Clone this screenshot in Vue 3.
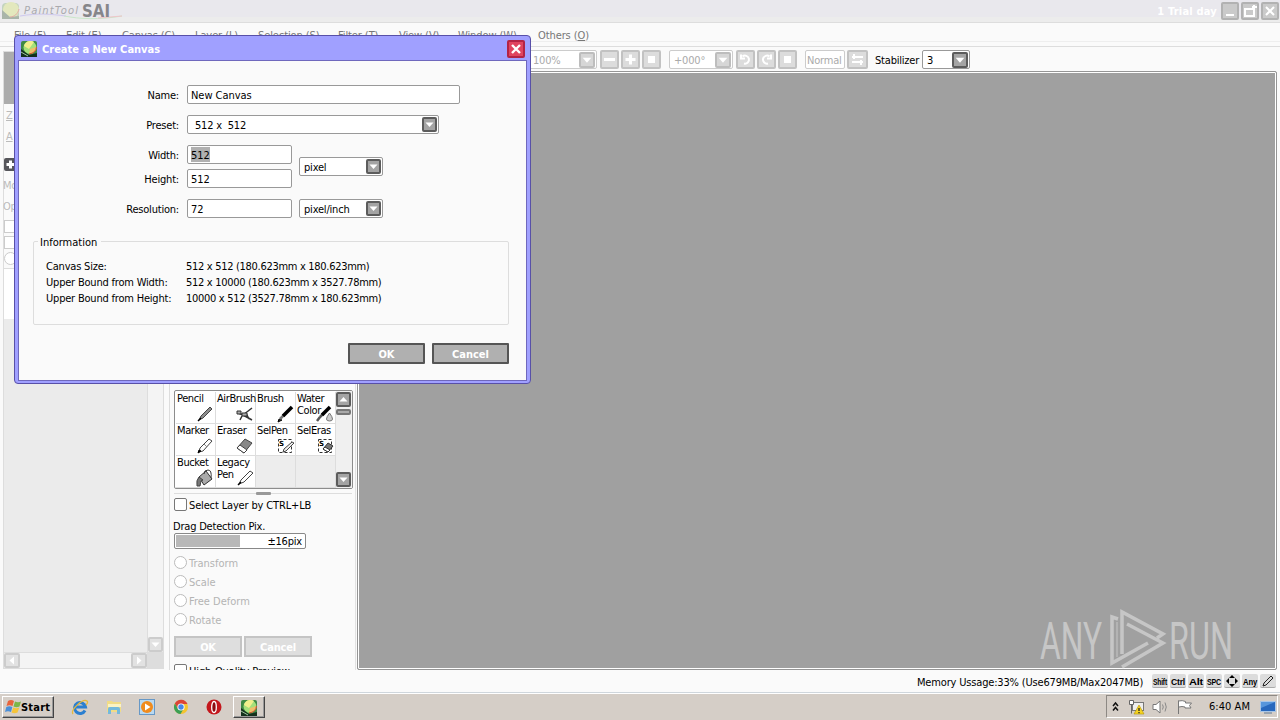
<template>
  <div class="desktop">
    <!-- MAIN WINDOW -->
    <header class="titlebar">
      <svg class="brand" width="124" height="22" viewBox="0 0 124 22">
        <rect x="2" y="3" width="17" height="16" rx="4" fill="#c3d3be" />
        <circle cx="11" cy="10" r="8" fill="#e3e8bd" />
        <path d="M2 10l8 7 9-1v3H2z" fill="#a9b5a9" />
        <path d="M10 17c4 0 8-3 9-8" stroke="#e0a9a4" fill="none" />
        <path d="M20 16c18-3 30-2 46 0" stroke="#cfc9ee" fill="none" />
        <path d="M64 16c16 3 34 4 58 0" stroke="#c9e6c9" fill="none" />
        <path d="M98 18l24-2" stroke="#efc5c9" fill="none" />
        <text x="24" y="14" class="brand-small" textLength="54">PaintTool</text>
        <text x="82" y="17" class="brand-big" textLength="28" lengthAdjust="spacingAndGlyphs">SAI</text>
      </svg>
      <span class="trial">1 Trial day</span>
      <div class="win-buttons">
        <svg v-for="d in winIcons" :key="d" class="win-button" viewBox="0 0 18 18">
          <rect x="1" y="1" width="16" height="16" rx="1" fill="#cacaca" stroke="#b2b2b2" stroke-width="2" />
          <path :d="d" fill="none" stroke="#fff" stroke-width="2" />
        </svg>
      </div>
    </header>

    <nav class="menubar">
      <span v-for="m in menus" :key="m[0]">{{ m[0] }} (<u>{{ m[1] }}</u>)</span>
    </nav>

    <div class="toolbar">
      <div class="combo zoom-combo dim">
        <span>100%</span>
        <svg class="drop" viewBox="2 2 11 11"><path :d="down" /></svg>
      </div>
      <div class="tool-buttons">
        <svg class="tool-button" viewBox="2 2 15 15"><path d="M4 9.500h11" stroke-width="3" /></svg>
        <svg class="tool-button" viewBox="2 2 15 15"><path d="M4.500 9.500h10M9.500 4.500v10" stroke-width="3" /></svg>
        <svg class="tool-button" viewBox="2 2 15 15"><path d="M6 9.500h7" stroke-width="7" /></svg>
      </div>
      <div class="combo angle-combo dim">
        <span>+000°</span>
        <svg class="drop" viewBox="2 2 11 11"><path :d="down" /></svg>
      </div>
      <div class="tool-buttons">
        <svg class="tool-button" viewBox="2 2 15 15"><path d="M6.500 6.500a4 4 0 1 1 1.500 7M5 4.500v4h4" stroke-width="2" /></svg>
        <svg class="tool-button" viewBox="2 2 15 15"><path d="M12.500 6.500a4 4 0 1 0-1.500 7M14 4.500v4h-4" stroke-width="2" /></svg>
        <svg class="tool-button" viewBox="2 2 15 15"><path d="M6 9.500h7" stroke-width="7" /></svg>
      </div>
      <div class="combo mode dim"><span>Normal</span></div>
      <svg class="tool-button swap" viewBox="2 2 17 15"><path d="M5 7h11M5 12h11M7 4v5M14 10v5" stroke-width="2" /></svg>
      <span class="stabilizer">Stabilizer</span>
      <div class="combo stab-combo">
        <span>3</span>
        <svg class="drop" viewBox="2 2 11 11"><path :d="down" /></svg>
      </div>
    </div>

    <main class="workspace">
      <!-- LAYER PANEL -->
      <aside class="layer-panel">
        <div class="navigator"></div>
        <div class="side-text first">Z</div>
        <div class="side-text">A</div>
        <svg class="add" viewBox="0 0 13 13"><rect width="13" height="13" rx="2" fill="#55555a" /><path d="M2.500 6.500h8M6.500 2.500v8" stroke="#fff" stroke-width="3" /></svg>
        <div class="side-text mode-label">Mo</div>
        <div class="side-text opacity-label">Op</div>
        <div class="side-box"></div>
        <div class="side-box"></div>
        <div class="side-box round"></div>
        <div class="layers">
          <div class="layer-main">
            <div class="layer-head"></div>
            <div class="layer-list"></div>
          </div>
          <div class="scroll-v">
            <svg class="pale-button" viewBox="2 2 11 11"><path :d="down" /></svg>
          </div>
        </div>
        <div class="scroll-h">
          <svg class="pale-button" viewBox="2 2 11 11"><path d="M9.500 3.500v8l-4.500-4z" /></svg>
          <svg class="pale-button" viewBox="2 2 11 11"><path d="M5.500 3.500v8l4.500-4z" /></svg>
          <i></i>
        </div>
      </aside>

      <!-- TOOL PANEL -->
      <aside class="tool-panel">
        <div class="brushes">
          <div class="brush-grid">
            <div v-for="(b, i) in brushes" :key="i" class="brush" :class="{ empty: !b.name }">
              <span>{{ b.name }}</span>
              <svg v-if="b.shapes" viewBox="0 0 20 18" width="20" height="18">
                <path v-for="(s, j) in b.shapes" :key="j" :d="s[0]" :fill="s[1]" :stroke="s[2]" :stroke-width="s[3] || 1" :stroke-dasharray="s[4]" />
                <text v-if="b.sel" x="4" y="9" class="sel-mark">S</text>
              </svg>
            </div>
          </div>
          <div class="brush-scroll">
            <svg class="drop" viewBox="2 2 11 11"><path d="M3.500 9.500h8l-4-4.500z" /></svg>
            <i></i>
            <svg class="drop last" viewBox="2 2 11 11"><path :d="down" /></svg>
          </div>
        </div>
        <div class="splitter"><i></i></div>
        <div class="check"><i></i><span>Select Layer by CTRL+LB</span></div>
        <div class="drag-label">Drag Detection Pix.</div>
        <div class="slider"><i></i><span>±16pix</span></div>
        <div v-for="r in radios" :key="r" class="radio"><i></i>{{ r }}</div>
        <div class="pale-actions">
          <div>OK</div>
          <div>Cancel</div>
        </div>
        <div class="check clipped"><i></i><span>High-Quality Preview</span></div>
      </aside>

      <section class="canvas">
        <svg class="watermark" width="200" height="68" viewBox="0 0 200 68">
          <g fill="#c6c6c6">
            <text x="6" y="58" class="mark" textLength="62" lengthAdjust="spacingAndGlyphs">ANY</text>
            <text x="135" y="58" class="mark" textLength="64" lengthAdjust="spacingAndGlyphs">RUN</text>
          </g>
          <g fill="none" stroke="#c6c6c6" stroke-width="3.500">
            <path d="M84 18l-6-2v46l36-20" />
            <path d="M93 23l36 19-41 24M88 53V11l41 22-6 4" />
            <path d="M83 21v35" stroke-width="1" />
          </g>
        </svg>
      </section>
    </main>

    <footer class="status">
      <span class="memory">Memory Ussage:33% (Use679MB/Max2047MB)</span>
      <span v-for="k in ['Shift', 'Ctrl', 'Alt', 'SPC']" :key="k" class="key"><svg viewBox="0 0 16 14"><text x="1" y="11" textLength="14" lengthAdjust="spacingAndGlyphs">{{ k }}</text></svg></span>
      <span class="key"><svg viewBox="0 0 16 14"><path d="M8 1l3 3H5zM8 13l3-3H5zM2 7l3-3v6zM14 7l-3-3v6z" /></svg></span>
      <span class="key"><svg viewBox="0 0 16 14"><text x="1" y="11" textLength="14" lengthAdjust="spacingAndGlyphs">Any</text></svg></span>
      <span class="key"><svg viewBox="0 0 16 14"><path d="M3 12l1-3 7-7 2 2-7 7z" fill="none" stroke="#222" /></svg></span>
    </footer>

    <!-- TASKBAR -->
    <div class="taskbar">
      <div class="start">
        <svg width="17" height="16" viewBox="0 0 17 16">
          <path d="M3 2q3-2 6 0L7.500 7q-3-1.500-6 0z" fill="#e8643c" />
          <path d="M10 2.500q3 1.500 6 0L14.500 7.500q-3 1.500-6 0z" fill="#7cb648" />
          <path d="M1.300 8q3-1.500 6 0L6 13q-3-1.500-6 0z" fill="#4a8fd8" />
          <path d="M8.300 8.500q3 1.500 6 0L12.500 13.500q-3 1.500-6 0z" fill="#f5c43a" />
        </svg>
        <span>Start</span>
      </div>
      <div class="launch">
        <svg viewBox="0 0 18 18">
          <path d="M14 12.500A5.500 5.500 0 1 1 14.500 9H5" fill="none" stroke="#2b7fd0" stroke-width="3" />
          <path d="M2 16C-1 12 12 0 16 3c1 1 0 3-1 4" fill="none" stroke="#e6b93c" stroke-width="1.300" />
        </svg>
        <svg viewBox="0 0 18 18">
          <path d="M2 3h5l1 1h8v10H2z" fill="#f1dc86" />
          <path d="M3 6h13v3H3z" fill="#fbf3c4" />
          <path d="M3 16v-5q0-2 2-2h8q2 0 2 2v5h-3v-4H6v4z" fill="#74b9dc" />
        </svg>
        <svg viewBox="0 0 18 18">
          <rect x="1.500" y="1.500" width="15" height="15" fill="#b9d9f1" stroke="#6798c6" />
          <circle cx="9" cy="9" r="6" fill="#f08b1d" />
          <path d="M7 5.500v7L12.500 9z" fill="#fff" />
        </svg>
        <svg viewBox="0 0 18 18">
          <circle cx="9" cy="9" r="7" fill="#f4c430" />
          <path d="M2.900 5.500A7 7 0 0 1 15.500 6H9L6 11z" fill="#dc4437" />
          <path d="M2.900 5.500A7 7 0 0 0 8.500 16l3-5H6z" fill="#3c9f55" />
          <circle cx="9" cy="9" r="3.600" fill="#fff" />
          <circle cx="9" cy="9" r="2.700" fill="#4687e8" />
        </svg>
        <svg viewBox="0 0 18 18">
          <circle cx="9" cy="9" r="7.500" fill="#c4171c" />
          <ellipse cx="9" cy="9" rx="2.300" ry="5.500" fill="#8c0c10" stroke="#fff" stroke-width="1.300" />
        </svg>
      </div>
      <div class="task"><svg class="sai" viewBox="0 0 16 16"><use href="#sai-icon" /></svg></div>
      <div class="tray">
        <svg width="8" height="12" viewBox="0 0 8 12"><path d="M1 5l2.500-3L6 5M1 9.500l2.500-3 2.500 3" fill="none" stroke="#111" stroke-width="1.500" /></svg>
        <svg class="net" width="17" height="16" viewBox="0 0 17 16">
          <rect x="4.500" y="3.500" width="11" height="8" fill="#eee" stroke="#777" />
          <path d="M1.500 1.500h4v4h-4zM3.500 5.500v9" fill="#fff" stroke="#666" />
          <path d="M6 15l5-9 5 9z" fill="#f5d321" stroke="#b39300" stroke-width=".6" />
          <path d="M11 9v3M11 13v1.200" stroke="#222" stroke-width="1.300" />
        </svg>
        <svg class="speaker" width="17" height="14" viewBox="0 0 17 14">
          <path d="M1 4.500h3L8 1v12L4 9.500H1z" fill="#fff" stroke="#777" />
          <path d="M10.500 4.500q1.500 2.500 0 5M13 2.500q2.500 4.500 0 9" fill="none" stroke="#888" />
        </svg>
        <svg class="flag" width="16" height="15" viewBox="0 0 16 15"><path d="M1.500 15V1.500M1.500 2q4-1 7 .5v1.500h6l-2 2.500 1.500 2.500H8V8q-3-1-6 0" fill="#fff" stroke="#777" /></svg>
        <span class="clock">6:40 AM</span>
        <svg width="16" height="14" viewBox="0 0 16 14"><path d="M.5 1.500h15v10H.5z" fill="#2868bd" stroke="#a9c6e7" /><path d="M1 2h14l-14 6z" fill="#5796dc" /><path d="M4 13h8" stroke="#5c7896" /></svg>
      </div>
    </div>

    <!-- NEW CANVAS DIALOG -->
    <div class="dialog">
      <div class="dialog-title">
        <svg class="sai" viewBox="0 0 16 16">
          <g id="sai-icon">
            <rect width="16" height="16" rx="2" fill="#3f8a45" />
            <path d="M0 8l8 6 8-2v4H0z" fill="#14301c" />
            <circle cx="9" cy="6.500" r="6.500" fill="#a5e07a" />
            <path d="M3 5a6.500 6.500 0 0 1 10-4L8 8z" fill="#f1ef8c" />
            <path d="M8 13q7-1 7.500-7L9 8z" fill="#efc06a" />
            <path d="M8 13q7-1 7.500-7" fill="none" stroke="#d14c2e" />
            <path d="M0 11l7 4" stroke="#9fc79d" />
          </g>
        </svg>
        <span>Create a New Canvas</span>
        <svg class="close" viewBox="0 0 18 18"><rect x="1" y="1" width="16" height="16" rx="1" fill="#e0435f" stroke="#b32345" stroke-width="2" /><path d="M5 5l8 8M13 5l-8 8" stroke="#fff" stroke-width="2.400" /></svg>
      </div>
      <div class="dialog-body">
        <div class="form">
          <label>Name:</label>
          <div class="field name">New Canvas</div>
          <label>Preset:</label>
          <div class="combo preset">
            <span>&nbsp;512 x&nbsp; 512</span>
            <svg class="drop" viewBox="2 2 11 11"><path :d="down" /></svg>
          </div>
          <div class="labels"><label>Width:</label><label>Height:</label></div>
          <div class="size">
            <div class="size-fields">
              <div class="field short"><mark>512</mark></div>
              <div class="field short">512</div>
            </div>
            <div class="combo unit">
              <span>pixel</span>
              <svg class="drop" viewBox="2 2 11 11"><path :d="down" /></svg>
            </div>
          </div>
          <label>Resolution:</label>
          <div class="size">
            <div class="field short">72</div>
            <div class="combo unit">
              <span>pixel/inch</span>
              <svg class="drop" viewBox="2 2 11 11"><path :d="down" /></svg>
            </div>
          </div>
        </div>
        <div class="info">
          <span class="legend">Information</span>
          <div v-for="row in info" :key="row[0]" class="info-row">
            <span>{{ row[0] }}</span><span class="value">{{ row[1] }}</span>
          </div>
        </div>
        <div class="actions">
          <div class="action">OK</div>
          <div class="action">Cancel</div>
        </div>
      </div>
    </div>
  </div>
</template>

<script setup>
// arrow of the drop-down and scroll buttons
const down = "M3.500 5.500h8l-4 4.500z";

const winIcons = ["M5 13h8", "M4 7h9v7H4zM13 3v4M11 5h5", "M5 5l8 8M13 5l-8 8"];

const menus = [
  ["File", "F"],
  ["Edit", "E"],
  ["Canvas", "C"],
  ["Layer", "L"],
  ["Selection", "S"],
  ["Filter", "T"],
  ["View", "V"],
  ["Window", "W"],
  ["Others", "O"],
];

const dashedBox = ["M3.500 2.500h13v13h-13z", "none", "#333", 1, "3 2"];

// each shape: path, fill, stroke, stroke width, dash
const brushes = [
  { name: "Pencil", shapes: [["M4 15l2-4 9-9 2 2-9 9z", "#8d8d8d", "#444"], ["M3 16l3-3", "none", "#000", 1.5]] },
  { name: "AirBrush", shapes: [["M3 8l5 2 9-7M8 10l9 5M7 11l-2 4M11 8l3 6", "none", "#333", 1.5], ["M2 6h4v3H2zM7 8h5v3H7z", "#aaa", "#333"]] },
  { name: "Brush", shapes: [["M3 17l1-3 3 1z", "#333", "#000"], ["M5 14l4-4", "none", "#777", 2.5], ["M8 11l9-9", "none", "#000", 3.5]] },
  { name: "Water Color", shapes: [["M2 16l3-4M5 12l4-4", "none", "#555", 2.5], ["M7 10l8-8", "none", "#000", 3.5], ["M14.500 8q-6 8 0 8t0-8z", "#ccc", "#777"]] },
  { name: "Marker", shapes: [["M4 15l1-4 9-9 3 2-9 10z", "#fff", "#444"], ["M3 16l1-3 2 1z", "#000", "#000"], ["M9 7l3 3", "none", "#888"]] },
  { name: "Eraser", shapes: [["M2 11l8-9 7 4-8 10z", "#888", "#444"], ["M2 11l3-3 7 5-3 3z", "#fff", "#444"]] },
  { name: "SelPen", sel: true, shapes: [dashedBox, ["M8 15l1-3 8-7 2 1-8 8z", "#eee", "#444"]] },
  { name: "SelEras", sel: true, shapes: [dashedBox, ["M8 12l5-6 5 3-5 6z", "#777", "#333"], ["M8 12l2-2 5 3-2 2z", "#fff", "#333"]] },
  { name: "Bucket", shapes: [["M4 8l7-6 6 8-8 6z", "#aaa", "#333"], ["M4 8q-3 3-2 9h3l1-5 2-1z", "#777", "#444"], ["M9 5q0-4 4-4t3 8", "none", "#333"]] },
  { name: "Legacy Pen", shapes: [["M4 15l2-4 9-9 3 2-9 9z", "#fff", "#444"], ["M3 16l3-3", "none", "#000", 1.5]] },
  {},
  {},
];

const radios = ["Transform", "Scale", "Free Deform", "Rotate"];

const info = [
  ["Canvas Size:", "512 x 512 (180.623mm x 180.623mm)"],
  ["Upper Bound from Width:", "512 x 10000 (180.623mm x 3527.78mm)"],
  ["Upper Bound from Height:", "10000 x 512 (3527.78mm x 180.623mm)"],
];
</script>

<style>
body {
  overflow: hidden;
}
</style>

<style scoped>
* {
  box-sizing: border-box;
}

.desktop {
  position: relative;
  display: flex;
  flex-direction: column;
  width: 1280px;
  height: 720px;
  overflow: hidden;
  background: #fafafa;
  color: #000;
  font: 11px/14px "DejaVu Sans Condensed", "DejaVu Sans", sans-serif;
  font-stretch: condensed;
  letter-spacing: -0.2px;
  white-space: nowrap;
}

svg {
  display: block;
  flex: none;
}

/* window frame */
.titlebar {
  display: flex;
  flex: none;
  height: 23px;
  background: linear-gradient(#e9e8ed 17px, #ececec 17px);
  border-bottom: 1px solid #ddd;
}

.brand-small {
  font: italic 10px "DejaVu Sans", sans-serif;
  letter-spacing: 0;
  fill: #aaaaae;
}

.brand-big {
  font: bold 18px "DejaVu Sans", sans-serif;
  letter-spacing: 0;
  fill: #86868a;
}

.trial {
  margin-left: auto;
  margin-right: 4px;
  padding-top: 5px;
  color: #fff;
  font-weight: bold;
  letter-spacing: 0.2px;
}

.win-buttons {
  display: flex;
  gap: 2px;
  padding: 2px 1px 0 0;
}

.win-button {
  width: 18px;
  height: 18px;
}

.menubar {
  display: grid;
  flex: none;
  grid-template-columns: 52px 56px 73px 63px 80px 61px 59px 80px auto;
  height: 19px;
  padding: 6px 0 0 14px;
  line-height: 13px;
  color: #777;
  letter-spacing: -0.1px;
  border-bottom: 1px solid #eee;
}

.toolbar {
  display: flex;
  flex: none;
  height: 25px;
  margin-top: 4px;
  padding: 3px 0 0 470px;
  border-top: 1px solid #ddd;
}

.combo {
  display: flex;
  justify-content: space-between;
  height: 19px;
  padding: 2px 1px 0 4px;
  line-height: 15px;
  background: #fff;
  border: 1px solid #999;
  border-radius: 2px;
}

.drop {
  width: 15px;
  height: 15px;
  background: #a4a4a4;
  border: 2px solid #5c5c5c;
  border-radius: 2px;
  fill: #fff;
}

.combo .drop {
  margin-top: -1px;
}

.toolbar .drop {
  width: 16px;
  height: 16px;
}

.dim {
  color: #aaa;
  border-color: #ccc;
}

.dim .drop {
  background: #d6d6d6;
  border-color: #bdbdbd;
}

.zoom-combo {
  width: 127px;
  padding-left: 62px;
}

.angle-combo {
  width: 64px;
  margin-left: 8px;
}

.tool-buttons {
  display: flex;
  gap: 2px;
  margin-left: 3px;
}

.tool-button {
  width: 19px;
  height: 19px;
  background: #dcdcdc;
  border: 2px solid #c2c2c2;
  border-radius: 2px;
  fill: none;
  stroke: #fff;
}

.mode {
  width: 40px;
  margin-left: 8px;
  padding-left: 1px;
}

.swap {
  width: 21px;
  margin-left: 2px;
}

.stabilizer {
  width: 47px;
  margin: 4px 0 0 7px;
}

.stab-combo {
  width: 48px;
}

/* panels */
.workspace {
  display: grid;
  flex: none;
  grid-template-columns: 162px 187px 917px;
  column-gap: 4px;
  height: 599px;
  padding-left: 3px;
}

.layer-panel {
  display: flex;
  flex-direction: column;
  width: 161px;
  height: 618px;
  margin-top: -20px;
  border: 1px solid #ddd;
}

.navigator {
  height: 52px;
  background: #acacac;
}

.side-text {
  width: 18px;
  height: 21px;
  margin-left: 2px;
  color: #bbb;
  text-decoration: underline;
}

.side-text.first {
  margin-top: 5px;
}

.add {
  width: 13px;
  height: 13px;
  margin-top: 7px;
}

.mode-label {
  margin: 8px 0 0 -1px;
  text-decoration: none;
}

.opacity-label {
  height: 20px;
  margin: 0 0 0 -1px;
  text-decoration: none;
}

.side-box {
  flex: none;
  width: 13px;
  height: 13px;
  margin-bottom: 3px;
  background: #fff;
  border: 1px solid #ccc;
}

.side-box.round {
  border-radius: 50%;
}

.layers {
  display: flex;
  flex: 1;
  border-top: 1px solid #ddd;
}

.layer-main {
  display: flex;
  flex: 1;
  flex-direction: column;
}

.layer-head {
  height: 50px;
  background: #fff;
}

.layer-list {
  flex: 1;
  background: #ebebeb;
}

.scroll-v {
  display: flex;
  align-items: flex-end;
  width: 16px;
  background: #f4f4f4;
  border-left: 1px solid #ddd;
}

.scroll-h {
  display: flex;
  justify-content: space-between;
  height: 16px;
  background: #f4f4f4;
  border-top: 1px solid #ddd;
}

.scroll-h .pale-button:nth-child(2) {
  margin-left: auto;
}

.scroll-h i {
  width: 16px;
  background: #ddd;
}

.pale-button {
  width: 16px;
  height: 15px;
  background: #e2e2e2;
  border: 2px solid #ccc;
  border-radius: 2px;
  fill: #fff;
}

.scroll-v .pale-button {
  width: 15px;
}

.tool-panel {
  height: 599px;
  padding: 319px 0 0 4px;
  overflow: hidden;
  border-left: 1px solid #ddd;
  border-right: 1px solid #e2e2e2;
}

.brushes {
  display: flex;
  width: 179px;
  height: 99px;
  background: #fff;
  border: 1px solid #8c8c8c;
  border-radius: 2px;
}

.brush-grid {
  display: grid;
  grid-template-columns: repeat(4, 40px);
  grid-template-rows: 32px 32px 32px;
  padding: 1px 0 0 1px;
}

.brush {
  position: relative;
  padding: 1px 0 0 1px;
  line-height: 12px;
  white-space: normal;
  letter-spacing: -0.4px;
  border-right: 1px solid #ddd;
  border-bottom: 1px solid #ddd;
}

.brush svg {
  position: absolute;
  right: 0;
  bottom: 0;
}

.brush.empty {
  background: #ededed;
}

.sel-mark {
  font: bold 7px "DejaVu Sans", sans-serif;
}

.brush-scroll {
  display: flex;
  flex-direction: column;
  width: 16px;
  padding: 1px 1px 1px 0;
  background: #f0f0f0;
}

.brush-scroll i {
  height: 6px;
  margin-top: 2px;
  background: #aaa;
  border: 2px solid #777;
  border-radius: 2px;
}

.brush-scroll .last {
  margin-top: auto;
}

.splitter {
  display: flex;
  align-items: center;
  justify-content: center;
  width: 178px;
  height: 9px;
  background: linear-gradient(transparent 4px, #ddd 4px, #ddd 5px, transparent 5px);
}

.splitter i {
  width: 15px;
  height: 3px;
  background: #999;
  border-radius: 1px;
}

.check {
  display: flex;
  gap: 2px;
  height: 13px;
  line-height: 16px;
  letter-spacing: -0.15px;
}

.check i {
  width: 13px;
  height: 13px;
  background: #fff;
  border: 1px solid #777;
  border-radius: 2px;
}

.drag-label {
  margin: 9px 0 -1px -1px;
}

.slider {
  display: flex;
  justify-content: space-between;
  width: 132px;
  height: 16px;
  padding: 1px 3px 1px 1px;
  border: 1px solid #888;
  border-radius: 2px;
  background: #fff;
}

.slider i {
  width: 64px;
  background: #b8b8b8;
}

.radio {
  display: flex;
  gap: 2px;
  height: 14px;
  margin-top: 5px;
  line-height: 16px;
  color: #b4b4b4;
  letter-spacing: 0;
}

.slider + .radio {
  margin-top: 7px;
}

.radio i {
  width: 13px;
  height: 13px;
  background: #fff;
  border: 1px solid #bbb;
  border-radius: 50%;
}

.pale-actions {
  display: flex;
  gap: 2px;
  margin-top: 9px;
}

.pale-actions div {
  width: 68px;
  height: 21px;
  line-height: 19px;
  text-align: center;
  color: #fff;
  font-weight: bold;
  background: #dedede;
  border: 2px solid #c4c4c4;
}

.clipped {
  margin-top: 7px;
}

.canvas {
  display: flex;
  align-items: flex-end;
  justify-content: flex-end;
  margin-left: -3px;
  background: #a0a0a0;
  border: 1px solid #959595;
  border-radius: 2px;
  box-shadow: inset 0 0 0 1px #fff;
}

.watermark {
  margin: 0 42px 0 0;
}

.mark {
  font: 52px Roboto, sans-serif;
  letter-spacing: 0;
}

.status {
  display: flex;
  flex: none;
  gap: 2px;
  height: 22px;
  padding: 4px 4px 0 917px;
}

.memory {
  width: 233px;
  padding-top: 1px;
  line-height: 15px;
  letter-spacing: -0.17px;
}

.key {
  width: 16px;
  height: 14px;
  background: #dcdcdc;
  border-bottom: 1px solid #aaa;
  border-radius: 2px;
}

.key text {
  font: bold 9px "Liberation Sans", sans-serif;
}

/* taskbar */
.taskbar {
  display: flex;
  flex: 1;
  padding-top: 2px;
  background: #d5cec7;
  border-top: 1px solid #cfd6dc;
  box-shadow: inset 0 1px #fff;
}

.start {
  display: flex;
  align-items: center;
  width: 52px;
  height: 22px;
  margin: 1px 0 0 2px;
  padding-left: 2px;
  font-weight: bold;
  letter-spacing: 0.2px;
  border: 1px solid;
  border-color: #fff #444 #444 #fff;
  box-shadow: inset -1px -1px #999;
}

.start span {
  margin: 1px 0 0 -1px;
}

.launch {
  display: flex;
  gap: 15.500px;
  padding: 3px 0 0 17px;
}

.launch svg {
  width: 18px;
  height: 18px;
}

.task {
  display: flex;
  justify-content: center;
  width: 32px;
  height: 22px;
  margin: 1px 0 0 10px;
  padding-top: 3px;
  border: 1px solid;
  border-color: #fff #444 #444 #fff;
  box-shadow: inset -1px -1px #999;
}

.sai {
  width: 16px;
  height: 16px;
}

.tray {
  display: flex;
  align-items: center;
  width: 172px;
  height: 23px;
  margin: 0 2px 0 auto;
  padding: 0 1px 0 5px;
  border: 1px solid;
  border-color: #8d8984 #fff #fff #8d8984;
}

.net {
  margin-left: 8px;
}

.speaker {
  margin-left: 7px;
}

.flag {
  margin-left: 8px;
}

.clock {
  width: 44px;
  margin: 1px 0 0 16px;
  letter-spacing: 0.05px;
}

.tray svg:last-child {
  margin-left: auto;
}

/* dialog */
.dialog {
  position: absolute;
  left: 14px;
  top: 35px;
  width: 517px;
  height: 349px;
  padding: 0 3px 2px;
  background: #a0a0ff;
  border: 1px solid #5850a8;
  border-radius: 4px;
}

.dialog-title {
  display: flex;
  align-items: center;
  height: 24px;
  padding: 2px 2px 0 3px;
  color: #fff;
  font-weight: bold;
  letter-spacing: 0;
}

.dialog-title span {
  margin: 1px 0 0 5px;
}

.close {
  width: 18px;
  height: 18px;
  margin-left: auto;
}

.dialog-body {
  height: 321px;
  padding: 24px 17px 0 14px;
  background: #fafafa;
  border: 1px solid #6f68bd;
}

.form {
  display: grid;
  grid-template-columns: 146px auto;
  column-gap: 8px;
  row-gap: 11px;
}

label {
  display: block;
  height: 19px;
  line-height: 22px;
  text-align: right;
}

.labels,
.size-fields {
  display: grid;
  gap: 5px;
}

.field {
  height: 19px;
  padding-left: 3px;
  line-height: 20px;
  letter-spacing: -0.05px;
  background: #fff;
  border: 1px solid #999;
  border-radius: 2px;
}

.name {
  width: 273px;
}

.short {
  width: 105px;
}

.preset {
  width: 252px;
}

.size {
  display: flex;
  align-items: center;
  gap: 7px;
}

.unit {
  width: 84px;
}

mark {
  display: block;
  width: 19px;
  height: 15px;
  margin-top: 1px;
  line-height: 18px;
  color: inherit;
  background: #b0b0b0;
}

.info {
  height: 84px;
  margin-top: 23px;
  padding: 0 0 0 12px;
  border: 1px solid #ddd;
  border-radius: 2px;
}

.legend {
  display: block;
  width: 63px;
  height: 14px;
  margin: -7px 0 10px -8px;
  padding-left: 2px;
  line-height: 16px;
  letter-spacing: 0;
  background: #fafafa;
}

.info-row {
  display: grid;
  grid-template-columns: 140px auto;
  height: 16px;
  line-height: 15px;
}

.value {
  letter-spacing: -0.3px;
}

.actions {
  display: flex;
  justify-content: flex-end;
  gap: 7px;
  margin-top: 18px;
}

.action {
  width: 77px;
  height: 21px;
  line-height: 19px;
  text-align: center;
  color: #fff;
  font-weight: bold;
  letter-spacing: 0;
  background: #b0b0b0;
  border: 2px solid #555;
  border-radius: 1px;
}
</style>
